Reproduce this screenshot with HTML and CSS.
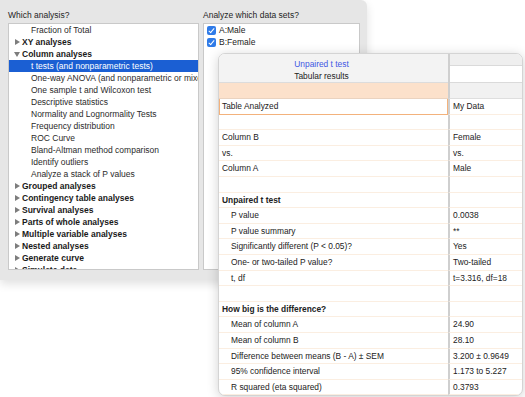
FILE: index.html
```html
<!DOCTYPE html>
<html lang="en">
<head>
  <meta charset="UTF-8" />
  <title>Analyze Data</title>
  <link rel="stylesheet" href="styles.css">
</head>
<body>

<div class="dialog">
  <div class="pane pane-analysis">
    <div class="pane-label">Which analysis?</div>
    <ul class="listbox">
      <li class="item sub">Fraction of Total</li>
      <li class="item group"><span class="tri"></span>XY analyses</li>
      <li class="item group open"><span class="tri"></span>Column analyses</li>
      <li class="item sub selected">t tests (and nonparametric tests)</li>
      <li class="item sub">One-way ANOVA (and nonparametric or mixed)</li>
      <li class="item sub">One sample t and Wilcoxon test</li>
      <li class="item sub">Descriptive statistics</li>
      <li class="item sub">Normality and Lognormality Tests</li>
      <li class="item sub">Frequency distribution</li>
      <li class="item sub">ROC Curve</li>
      <li class="item sub">Bland-Altman method comparison</li>
      <li class="item sub">Identify outliers</li>
      <li class="item sub">Analyze a stack of P values</li>
      <li class="item group"><span class="tri"></span>Grouped analyses</li>
      <li class="item group"><span class="tri"></span>Contingency table analyses</li>
      <li class="item group"><span class="tri"></span>Survival analyses</li>
      <li class="item group"><span class="tri"></span>Parts of whole analyses</li>
      <li class="item group"><span class="tri"></span>Multiple variable analyses</li>
      <li class="item group"><span class="tri"></span>Nested analyses</li>
      <li class="item group"><span class="tri"></span>Generate curve</li>
      <li class="item group"><span class="tri"></span>Simulate data</li>
    </ul>
  </div>
  <div class="pane pane-data">
    <div class="pane-label">Analyze which data sets?</div>
    <ul class="listbox">
      <li class="item check"><span class="checkbox"></span>A:Male</li>
      <li class="item check"><span class="checkbox"></span>B:Female</li>
    </ul>
  </div>
</div>

<div class="sheet">
  <div class="sheet-head">
    <div class="head-title">
      <div class="title-blue">Unpaired t test</div>
      <div>Tabular results</div>
    </div>
    <div class="head-side">
      <div class="side-top"></div>
      <div class="side-bottom"></div>
    </div>
  </div>

  <div class="row peach"><div class="cell"></div><div class="cell val"></div></div>
  <div class="row"><div class="cell active">Table Analyzed</div><div class="cell val">My Data</div></div>
  <div class="row"><div class="cell"></div><div class="cell val"></div></div>
  <div class="row"><div class="cell">Column B</div><div class="cell val">Female</div></div>
  <div class="row"><div class="cell">vs.</div><div class="cell val">vs.</div></div>
  <div class="row"><div class="cell">Column A</div><div class="cell val">Male</div></div>
  <div class="row"><div class="cell"></div><div class="cell val"></div></div>
  <div class="row"><div class="cell bold">Unpaired t test</div><div class="cell val"></div></div>
  <div class="row"><div class="cell ind">P value</div><div class="cell val">0.0038</div></div>
  <div class="row"><div class="cell ind">P value summary</div><div class="cell val">**</div></div>
  <div class="row"><div class="cell ind">Significantly different (P &lt; 0.05)?</div><div class="cell val">Yes</div></div>
  <div class="row"><div class="cell ind">One- or two-tailed P value?</div><div class="cell val">Two-tailed</div></div>
  <div class="row"><div class="cell ind">t, df</div><div class="cell val">t=3.316, df=18</div></div>
  <div class="row"><div class="cell"></div><div class="cell val"></div></div>
  <div class="row"><div class="cell bold">How big is the difference?</div><div class="cell val"></div></div>
  <div class="row"><div class="cell ind">Mean of column A</div><div class="cell val">24.90</div></div>
  <div class="row"><div class="cell ind">Mean of column B</div><div class="cell val">28.10</div></div>
  <div class="row"><div class="cell ind">Difference between means (B - A) ± SEM</div><div class="cell val">3.200 ± 0.9649</div></div>
  <div class="row"><div class="cell ind">95% confidence interval</div><div class="cell val">1.173 to 5.227</div></div>
  <div class="row"><div class="cell ind">R squared (eta squared)</div><div class="cell val">0.3793</div></div>
</div>

</body>
</html>
```

FILE: styles.css
```css
* {
  box-sizing: border-box;
  margin: 0;
  padding: 0;
}

body {
  width: 525px;
  height: 397px;
  background: #ffffff;
  font-family: 'Liberation Sans', Arial, sans-serif;
  color: #222;
  position: relative;
  overflow: hidden;
}

/* analysis dialog */
.dialog {
  width: 367px;
  height: 280px;
  background: #e6e6e6;
  border-radius: 0 6px 6px 0;
  box-shadow: 0 4px 10px rgba(0, 0, 0, 0.12);
  display: flex;
  gap: 4px;
  padding: 9px 7px 10px 8px;
  font-size: 8.5px;
}

.pane {
  display: flex;
  flex-direction: column;
}

.pane-analysis {
  width: 191px;
}

.pane-data {
  flex: 1;
}

.pane-label {
  height: 14px;
  line-height: 12px;
  color: #1e1e1e;
}

.listbox {
  list-style: none;
  flex: 1;
  background: #fff;
  border: 1px solid #c9c9c9;
  overflow: hidden;
}

.item {
  height: 12px;
  line-height: 12px;
  white-space: nowrap;
  display: flex;
  align-items: center;
}

.item.sub {
  padding-left: 22px;
  color: #2a2a2a;
}

.item.group {
  padding-left: 6px;
  font-weight: bold;
  color: #1a1a1a;
}

.item.selected {
  background: #1b5fd3;
  color: #fff;
}

.tri {
  width: 0;
  height: 0;
  border-top: 3px solid transparent;
  border-bottom: 3px solid transparent;
  border-left: 5px solid #7d7d7d;
  margin-right: 2px;
}

.item.open .tri {
  border-left: 3px solid transparent;
  border-right: 3px solid transparent;
  border-top: 5px solid #7d7d7d;
  border-bottom: 0;
  margin-left: -1px;
}

.item.check {
  padding-left: 3px;
}

.checkbox {
  width: 9px;
  height: 9px;
  border-radius: 2px;
  background: #2f7be8;
  margin-right: 3px;
  position: relative;
}

.checkbox::after {
  content: "";
  position: absolute;
  left: 3px;
  top: 1px;
  width: 2px;
  height: 5px;
  border-right: 1.3px solid #fff;
  border-bottom: 1.3px solid #fff;
  transform: rotate(40deg);
}

/* results sheet window */
.sheet {
  position: absolute;
  left: 218px;
  top: 53px;
  width: 305px;
  height: 343px;
  background: #fff;
  border: 1px solid #d4d4d4;
  border-radius: 7px;
  box-shadow: 0 2px 12px rgba(0, 0, 0, 0.18);
  overflow: hidden;
  font-size: 8.4px;
  color: #222;
}

.sheet-head {
  display: grid;
  grid-template-columns: 229px 1fr;
  height: 29px;
}

.head-title {
  background: #f3f3f3;
  border-bottom: 1px solid #dcdcdc;
  padding: 4px 24px 0 0;
  text-align: center;
  line-height: 12px;
}

.title-blue {
  color: #4156e3;
}

.head-side {
  border-left: 2px solid #cfcfcf;
  display: flex;
  flex-direction: column;
}

.side-top {
  height: 12px;
  background: #efefef;
  border-bottom: 1px solid #dadada;
}

.side-bottom {
  flex: 1;
  border-bottom: 1px solid #dadada;
}

.row {
  display: grid;
  grid-template-columns: 229px 1fr;
  height: 15.6px;
}

.row .cell {
  border-bottom: 1px solid #fbeee1;
  padding-left: 3px;
  line-height: 15px;
  white-space: nowrap;
  overflow: hidden;
}

.row .cell.val {
  border-left: 2px solid #cfcfcf;
  padding-left: 3px;
}

.row.peach {
  height: 16px;
}

.row.peach .cell {
  background: #fce1cb;
  border-bottom: 1px solid #ead3c0;
}

.row.peach .cell.val {
  background: #f1f1f1;
  border-bottom: 1px solid #dedede;
}

.row .cell.active {
  border: 1px solid #f3b27c;
  border-top: 0;
  padding-left: 2px;
}

.row .cell.ind {
  padding-left: 12px;
}

.row .cell.bold {
  font-weight: bold;
}
```
